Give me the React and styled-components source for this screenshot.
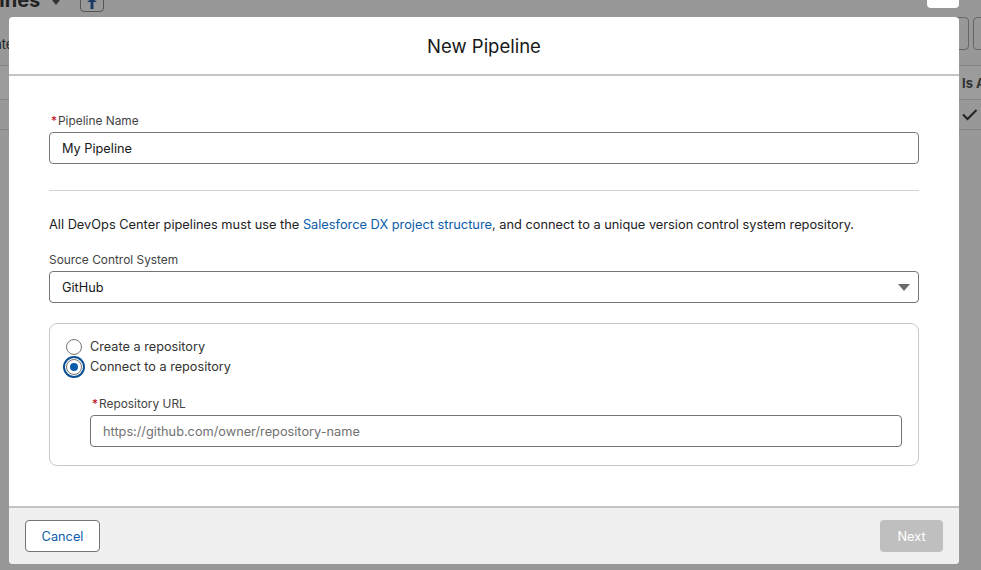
import React from 'react';
import styled, { createGlobalStyle } from 'styled-components';

const Global = createGlobalStyle`
  html, body {
    margin: 0;
    padding: 0;
    height: 100%;
    background: #989898;
    font-family: Inter, "Liberation Sans", Arial, sans-serif;
  }
`;

// Greyed page behind the modal
const Page = styled.div`
  position: relative;
  width: 981px;
  height: 570px;
  overflow: hidden;
  background: #989898;
`;

const PageTop = styled.div`
  height: 66px;
  box-sizing: border-box;
  display: flex;
  flex-direction: column;
  border-bottom: 1px solid #858585;
`;

const TitleRow = styled.div`
  height: 17px;
  display: flex;
  align-items: flex-start;
  margin-top: -13px;
  flex-shrink: 0;
`;

const PageTitle = styled.div`
  font-size: 20px;
  font-weight: 700;
  line-height: 26px;
  color: #222;
  margin-left: -49px;
`;

const Caret = styled.div`
  width: 0;
  height: 0;
  margin: 13px 0 0 12px;
  border-left: 4px solid transparent;
  border-right: 4px solid transparent;
  border-top: 5px solid #333;
`;

const PinButton = styled.div`
  width: 24px;
  height: 25px;
  margin-left: 20px;
  box-sizing: border-box;
  border: 1px solid #555;
  border-radius: 4px;
  display: flex;
  justify-content: center;
  align-items: flex-end;
  padding-bottom: 2px;
`;

const WhiteTab = styled.div`
  width: 32px;
  height: 21px;
  margin-left: auto;
  margin-right: 22px;
  background: #fff;
  border-radius: 4px;
`;

const Toolbar = styled.div`
  flex: 1;
  display: flex;
  justify-content: space-between;
  align-items: flex-start;
  padding-top: 13px;
`;

const Clip = styled.div`
  font-size: 13px;
  line-height: 22px;
  color: #222;
  margin: 16px 0 0 -15px;
`;

const ToolGroup = styled.div`
  display: flex;
  gap: 4px;
  margin-right: -20px;
`;

const ToolButton = styled.div`
  width: 28px;
  height: 33px;
  box-sizing: border-box;
  border: 1px solid #666;
  border-radius: 4px;
`;

const HeaderRow = styled.div`
  height: 34px;
  box-sizing: border-box;
  border-bottom: 1px solid #858585;
  display: flex;
  justify-content: flex-end;
  align-items: center;
  background: #9b9b9b;
`;

const HeaderCell = styled.div`
  width: 19px;
  font-size: 13px;
  font-weight: 700;
  color: #333;
  white-space: nowrap;
  overflow: hidden;
`;

const DataRow = styled.div`
  height: 30px;
  box-sizing: border-box;
  border-bottom: 1px solid #858585;
  display: flex;
  justify-content: flex-end;
  align-items: center;
  padding-right: 3px;
`;

// Modal
const Modal = styled.div`
  position: absolute;
  left: 9px;
  top: 17px;
  width: 950px;
  height: 547px;
  background: #fff;
  border-radius: 4px;
  display: flex;
  flex-direction: column;
  overflow: hidden;
`;

const ModalHeader = styled.div`
  height: 59px;
  box-sizing: border-box;
  border-bottom: 2px solid #c4c4c4;
  display: flex;
  justify-content: center;
  align-items: center;
  font-size: 18.5px;
  color: #181818;
`;

const ModalBody = styled.div`
  flex: 1;
  box-sizing: border-box;
  padding: 36px 40px 0;
  display: flex;
  flex-direction: column;
  color: #333;
`;

const Label = styled.div`
  font-size: 11.9px;
  line-height: 18px;
  color: #444;
  margin-bottom: 2px;
`;

const Star = styled.span`
  color: #ba0517;
  margin: 0 1px 0 2px;
`;

const TextField = styled.div`
  height: 32px;
  box-sizing: border-box;
  border: 1px solid #747474;
  border-radius: 4px;
  padding: 0 12px;
  display: flex;
  align-items: center;
  justify-content: space-between;
  font-size: 12.75px;
  color: ${(p) => (p.$placeholder ? '#717171' : '#181818')};
  background: #fff;
`;

const Divider = styled.div`
  height: 1px;
  background: #d4d4d4;
  margin: 26px 0 25px;
`;

const Intro = styled.p`
  margin: 0 0 17px;
  font-size: 12.8px;
  line-height: 18px;
  color: #222;
`;

const DocLink = styled.a`
  color: #0b5cab;
  text-decoration: none;
`;

const Arrow = styled.div`
  width: 0;
  height: 0;
  margin-right: -4px;
  border-left: 6px solid transparent;
  border-right: 6px solid transparent;
  border-top: 7px solid #6b6b6b;
`;

const RepoBox = styled.div`
  margin-top: 20px;
  height: 143px;
  box-sizing: border-box;
  border: 1px solid #c9c9c9;
  border-radius: 8px;
  padding: 13px 16px 0;
`;

const RadioRow = styled.div`
  height: 20px;
  display: flex;
  align-items: center;
  gap: 8px;
  font-size: 12.7px;
  color: #333;
`;

const RadioText = styled.span`
  margin-top: -2px;
`;

const RadioDot = styled.div`
  width: 16px;
  height: 16px;
  box-sizing: border-box;
  border: 1px solid #747474;
  border-radius: 50%;
  background: #fff;
  display: flex;
  justify-content: center;
  align-items: center;
  flex-shrink: 0;
  box-shadow: ${(p) => (p.$checked ? '0 0 0 1px #fff, 0 0 0 3px #0b4f94' : 'none')};

  &::after {
    content: '';
    display: ${(p) => (p.$checked ? 'block' : 'none')};
    width: 8px;
    height: 8px;
    border-radius: 50%;
    background: #0b5cab;
  }
`;

const RepoField = styled.div`
  margin: 18px 0 0 24px;
`;

const ModalFooter = styled.div`
  height: 58px;
  box-sizing: border-box;
  border-top: 2px solid #c4c4c4;
  background: #f0f0f0;
  padding: 0 16px;
  display: flex;
  justify-content: space-between;
  align-items: center;
`;

const Button = styled.div`
  height: 32px;
  box-sizing: border-box;
  border-radius: 4px;
  display: flex;
  justify-content: center;
  align-items: center;
  font-size: 12.75px;
`;

const CancelButton = styled(Button)`
  width: 75px;
  background: #fff;
  border: 1px solid #747474;
  color: #0b5cab;
`;

const NextButton = styled(Button)`
  width: 63px;
  background: #bfbfbf;
  color: #fff;
`;

export default function App() {
  return (
    <Page>
      <Global />
      <PageTop>
        <TitleRow>
          <PageTitle>Pipelines</PageTitle>
          <Caret />
          <PinButton>
            <svg width="10" height="11" viewBox="0 0 10 11" fill="#1b3a66">
              <path d="M0 4 L5 0 L10 4 H6.5 V11 H3.5 V4 Z" />
            </svg>
          </PinButton>
          <WhiteTab />
        </TitleRow>
        <Toolbar>
          <Clip>Date</Clip>
          <ToolGroup>
            <ToolButton />
            <ToolButton />
          </ToolGroup>
        </Toolbar>
      </PageTop>
      <HeaderRow>
        <HeaderCell>Is Active</HeaderCell>
      </HeaderRow>
      <DataRow>
        <svg width="17" height="15" viewBox="0 0 17 15" fill="none" stroke="#222" strokeWidth="2">
          <path d="M2 7.5 L6.5 12 L15.5 3" />
        </svg>
      </DataRow>

      <Modal>
        <ModalHeader>New Pipeline</ModalHeader>
        <ModalBody>
          <Label><Star>*</Star>Pipeline Name</Label>
          <TextField>My Pipeline</TextField>
          <Divider />
          <Intro>
            All DevOps Center pipelines must use the <DocLink href="#">Salesforce DX project structure</DocLink>, and connect to a unique version control system repository.
          </Intro>
          <Label>Source Control System</Label>
          <TextField>
            GitHub
            <Arrow />
          </TextField>
          <RepoBox>
            <RadioRow><RadioDot /><RadioText>Create a repository</RadioText></RadioRow>
            <RadioRow><RadioDot $checked /><RadioText>Connect to a repository</RadioText></RadioRow>
            <RepoField>
              <Label><Star>*</Star>Repository URL</Label>
              <TextField $placeholder>https://github.com/owner/repository-name</TextField>
            </RepoField>
          </RepoBox>
        </ModalBody>
        <ModalFooter>
          <CancelButton>Cancel</CancelButton>
          <NextButton>Next</NextButton>
        </ModalFooter>
      </Modal>
    </Page>
  );
}
